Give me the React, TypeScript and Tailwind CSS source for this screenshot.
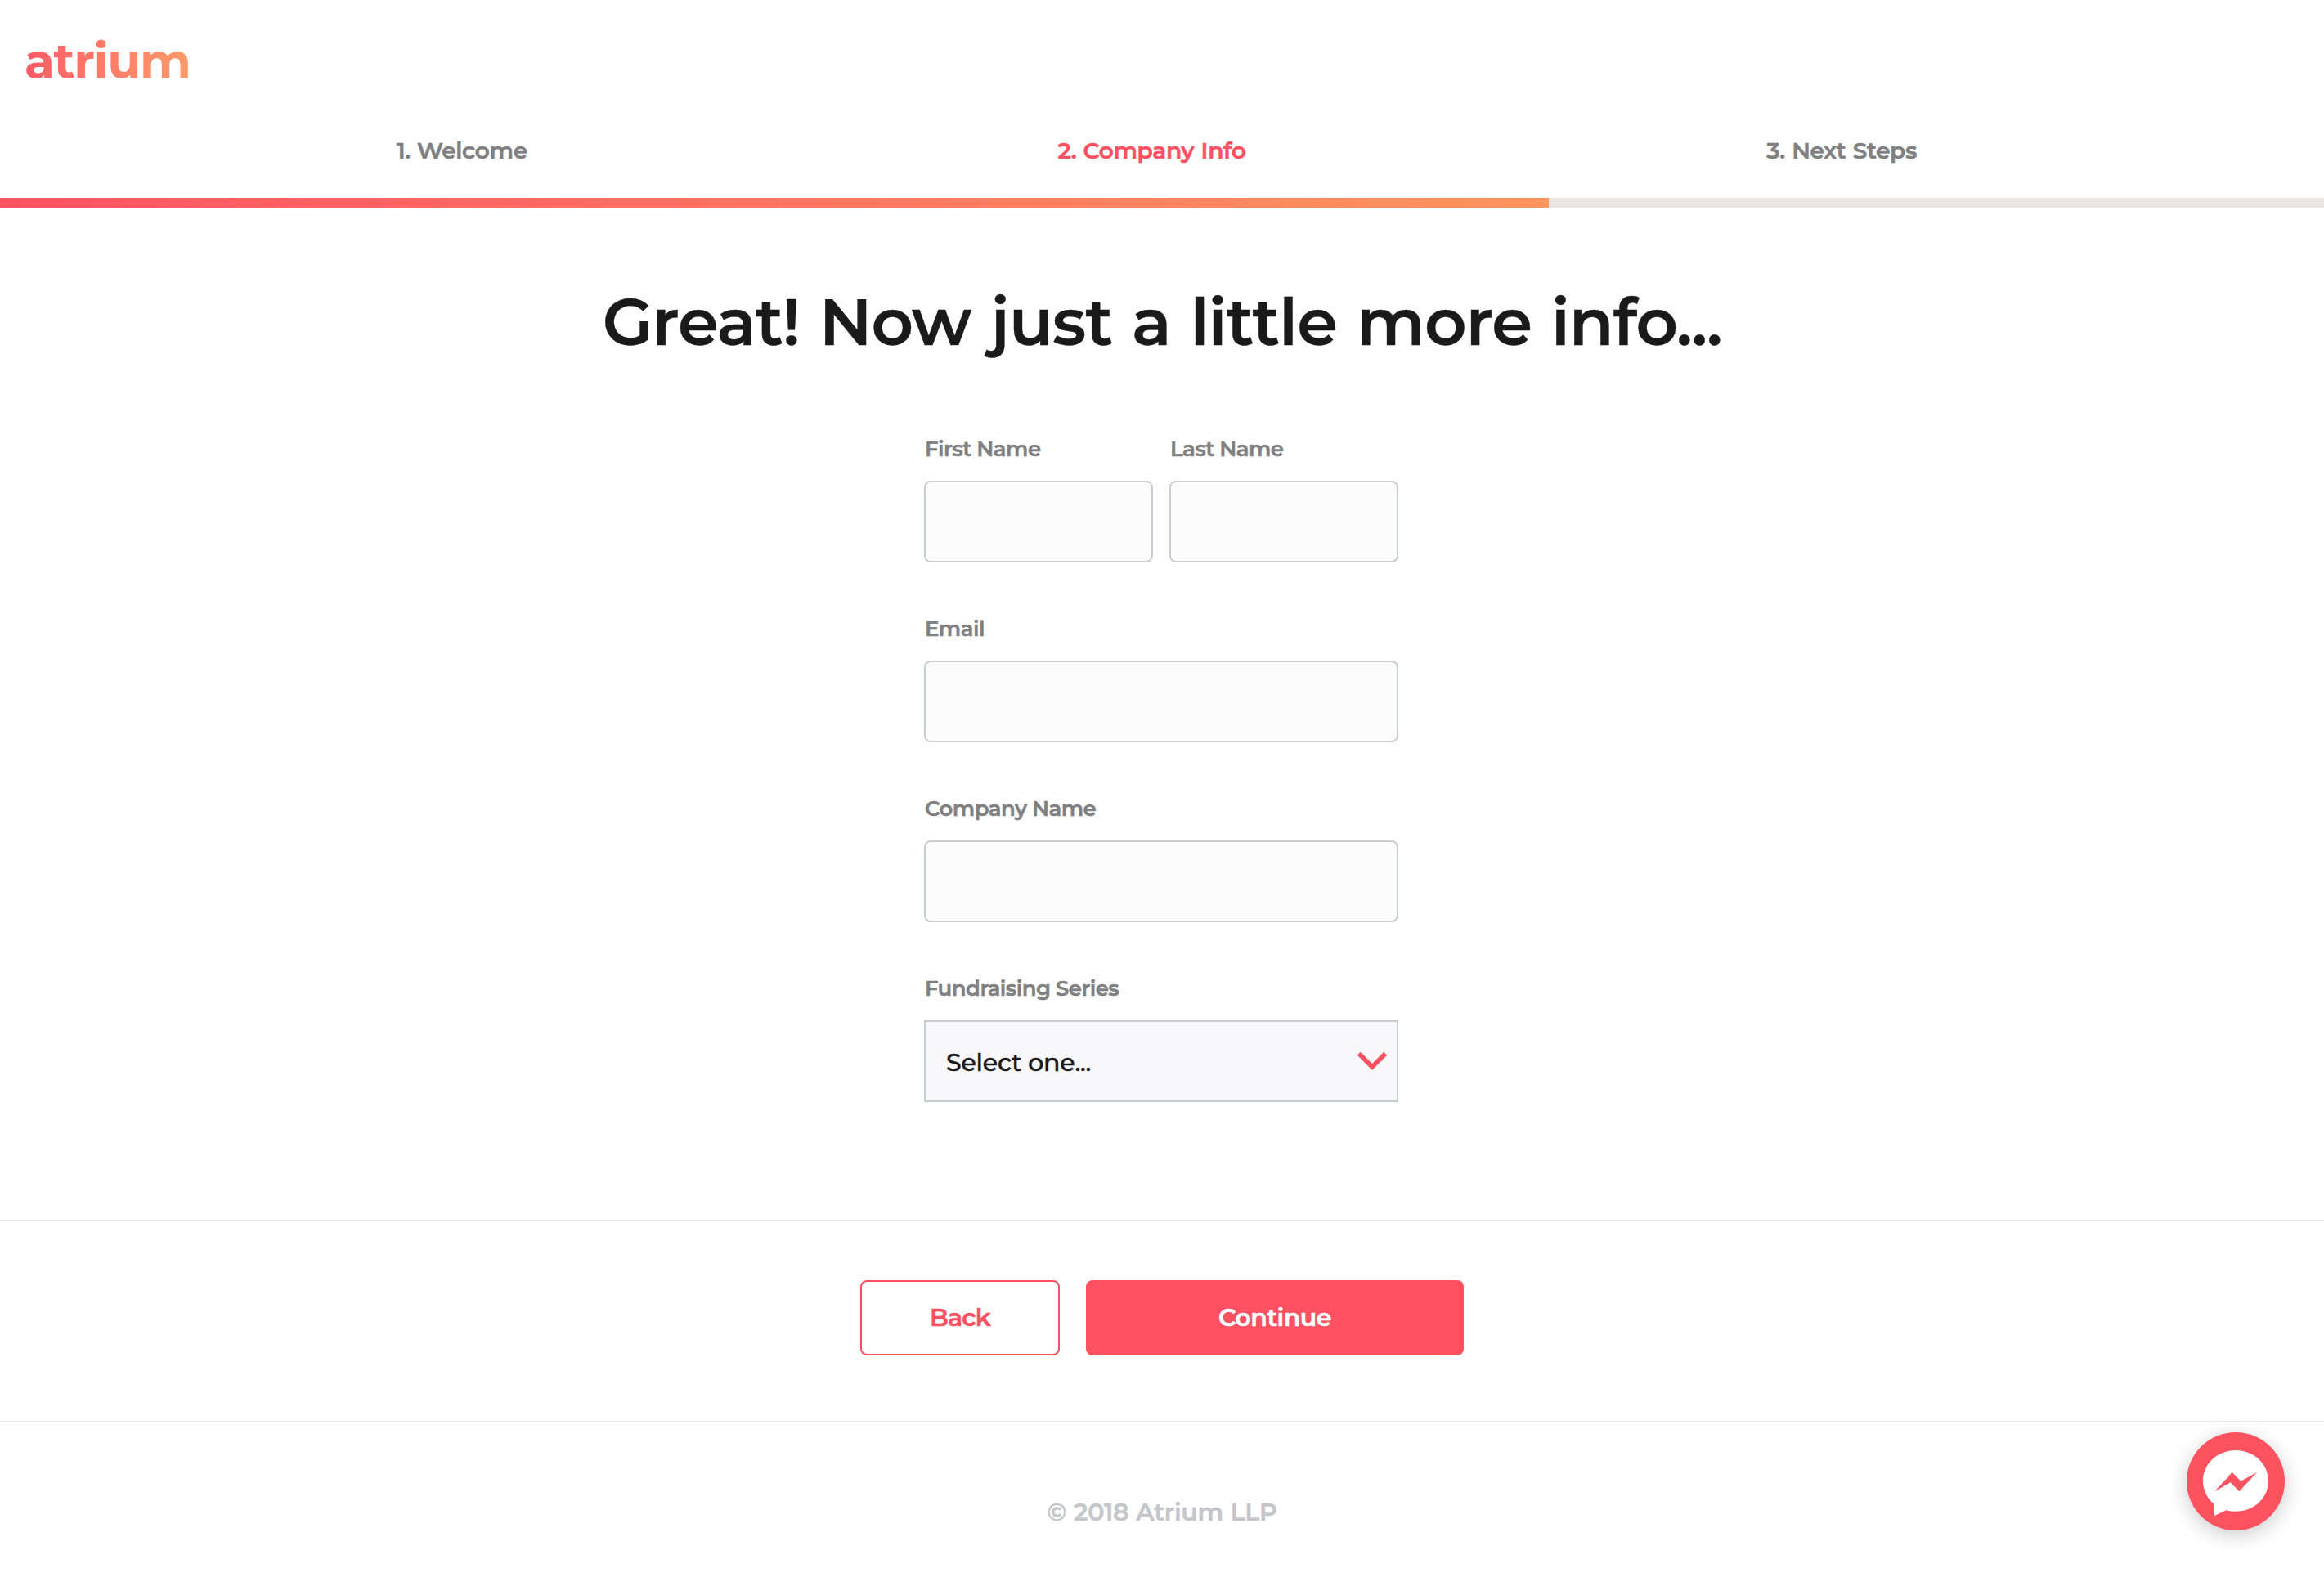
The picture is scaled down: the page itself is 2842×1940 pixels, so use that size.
import React from 'react';

interface Step {
    label: string;
    active?: boolean;
}

interface FieldProps {
    id: string;
    label: string;
    className?: string;
    children?: React.ReactNode;
}

const steps: Step[] = [
    { label: '1. Welcome' },
    { label: '2. Company Info', active: true },
    { label: '3. Next Steps' },
];

const Field: React.FC<FieldProps> = ({ id, label, className = '', children }) => (
    <div className={`flex flex-col ${className}`}>
        <label htmlFor={id} className="h-8 pl-px mb-[23px] text-[26px] leading-8 font-semibold [-webkit-text-stroke:0.5px] tracking-[-0.55px] text-[#808080] whitespace-nowrap">
            {label}
        </label>
        {children ?? (
            <input
                id={id}
                type="text"
                className="w-full h-[100px] px-6 text-[30px] rounded-lg border-2 border-[#c9cdd2] bg-[#fcfcfc] outline-none focus:border-[#fd5162]"
            />
        )}
    </div>
);

const Header: React.FC = () => (
    <header className="pt-11">
        <a className="block w-fit ml-[30px] h-[69px] text-[60px] leading-[62px] font-bold tracking-[-1.4px] bg-linear-to-r from-[#fe5a66] to-[#fe9a6a] bg-clip-text text-transparent">
            atrium
        </a>
        <nav className="grid grid-cols-3 w-[2531px] ml-[143px] mt-[51px] h-[78px]">
            {steps.map(step => (
                <div
                    key={step.label}
                    aria-current={step.active ? 'step' : undefined}
                    className={`text-center text-[28px] leading-10 font-semibold [-webkit-text-stroke:0.6px] tracking-[-0.35px] [word-spacing:1px] ${step.active ? 'text-[#fd5162]' : 'text-[#808080]'}`}
                >
                    {step.label}
                </div>
            ))}
        </nav>
        <div className="h-3 bg-[#e9e5e5]">
            <div className="h-full w-[1894px] bg-linear-to-r from-[#fe5163] to-[#fe945f]" />
        </div>
    </header>
);

const MessengerButton: React.FC = () => (
    <button aria-label="Open chat" className="fixed right-12 bottom-[68px] size-[120px] rounded-full bg-[#fd5260] shadow-[0_6px_24px_rgba(0,0,0,0.2)]">
        <svg width="120" height="120" viewBox="0 0 120 120">
            <path d="M60 22C37.900 22 20 38.400 20 59.500C20 71 25.300 81.200 34 88.200V102L48.500 95.300C52.100 96.300 56 96.800 60 96.800C82.100 96.800 100 80.500 100 59.500C100 38.400 82.100 22 60 22Z" fill="#fff" />
            <path d="M34.300 72.200L55.600 49L66.300 59.800L86 49L64.300 72.200L53.600 61.300Z" fill="#fd5260" />
        </svg>
    </button>
);

const App: React.FC = () => {
    return (
        <div className="w-full h-[1940px] overflow-hidden bg-white font-['Montserrat','Inter',sans-serif]">
            <Header />

            <main className="h-[1238px] pt-[90px]">
                <h1 className="text-center text-[80px] leading-[100px] font-semibold [-webkit-text-stroke:0.4px] tracking-[-1.1px] [word-spacing:3px] text-[#1a1a1a]">
                    Great! Now just a little more info...
                </h1>

                <form className="w-[580px] ml-[1130px] mt-[89px] flex flex-col gap-[65px]">
                    <div className="flex gap-5">
                        <Field id="first-name" label="First Name" className="flex-1" />
                        <Field id="last-name" label="Last Name" className="flex-1" />
                    </div>
                    <Field id="email" label="Email" />
                    <Field id="company" label="Company Name" />
                    <Field id="series" label="Fundraising Series">
                        <div id="series" role="button" className="flex items-center justify-between h-[100px] pl-[25px] pr-[11px] border-2 border-[#c9cdd2] bg-[#f8f8fb]">
                            <span className="pt-[3px] text-[30px] leading-10 font-medium [-webkit-text-stroke:0.5px] tracking-[-0.2px] text-[#1a1a1a]">Select one...</span>
                            <svg width="38" height="24" viewBox="0 0 38 24" fill="none" stroke="#fd5162" strokeWidth="5.500">
                                <path d="M2.800 2.800L19 19L35.200 2.800" />
                            </svg>
                        </div>
                    </Field>
                </form>
            </main>

            <section className="flex justify-center gap-8 h-[248px] pt-[72px] border-y-2 border-[#e9e9e9]">
                <button className="w-[244px] h-[92px] pb-0.5 rounded-lg border-2 border-[#fd5162] text-[30px] font-semibold [-webkit-text-stroke:0.6px] tracking-[-0.8px] text-[#fd5162]">
                    Back
                </button>
                <button className="w-[462px] h-[92px] pb-0.5 rounded-lg bg-[#fd5162] text-[30px] font-semibold [-webkit-text-stroke:0.6px] tracking-[-0.5px] text-white">
                    Continue
                </button>
            </section>

            <footer className="pt-[90px] text-center text-[30px] leading-10 font-semibold [-webkit-text-stroke:0.5px] tracking-[-0.3px] [word-spacing:1px] text-[#c4c6ca]">
                © 2018 Atrium LLP
            </footer>

            <MessengerButton />
        </div>
    );
};

export default App;
